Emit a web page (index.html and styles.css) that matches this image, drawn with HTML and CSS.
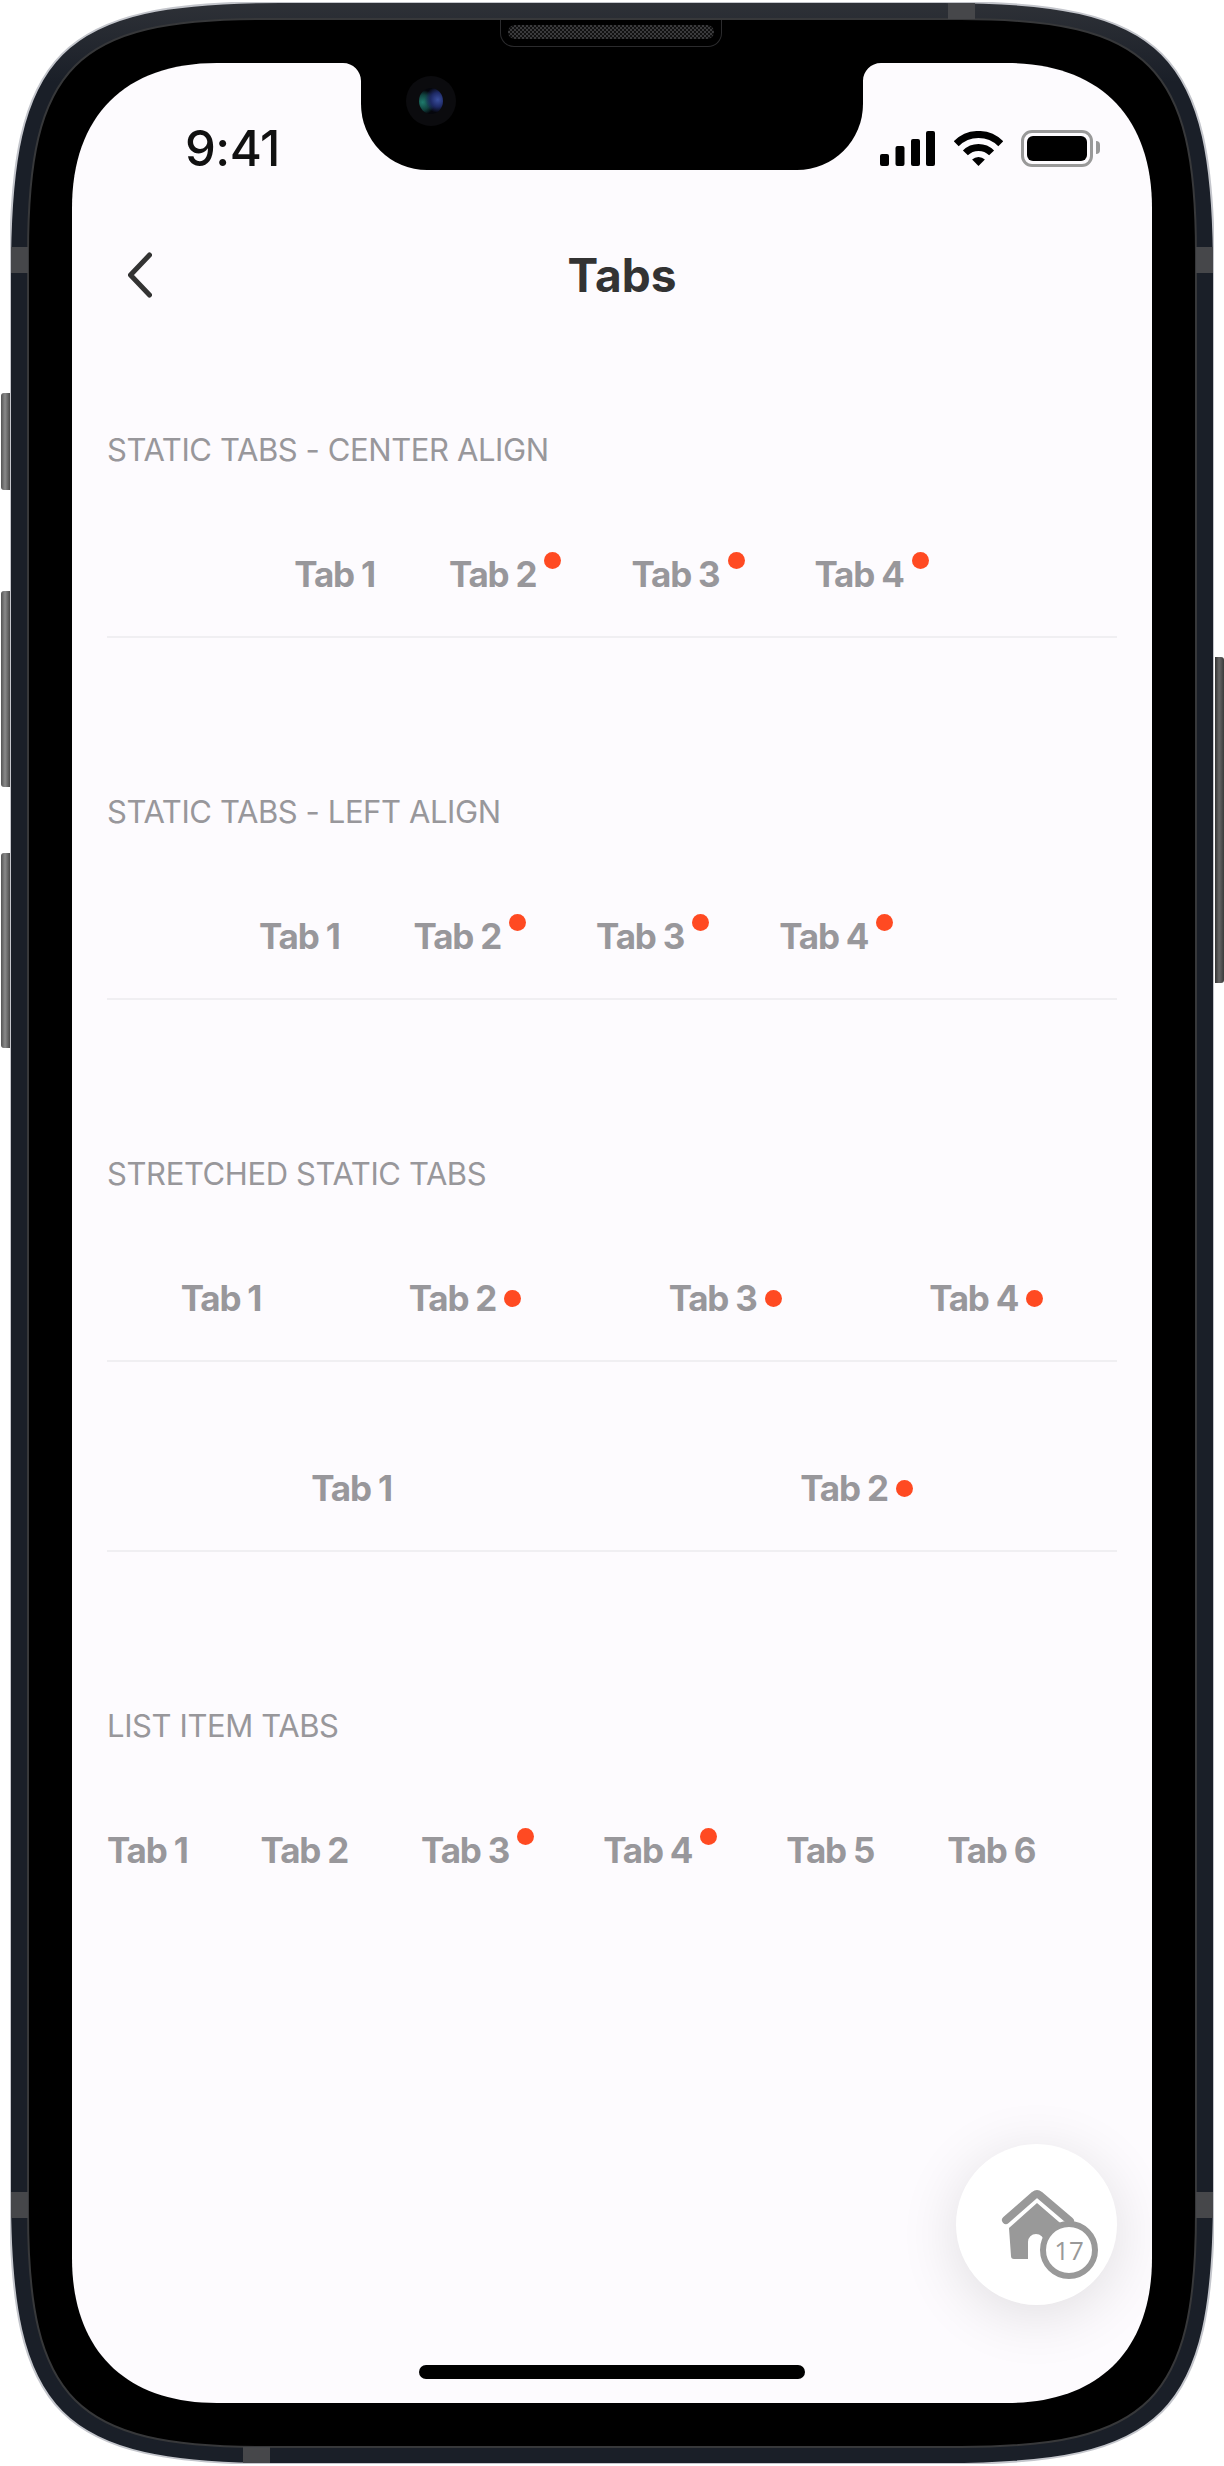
FILE: index.html
```html
<!DOCTYPE html>
<html lang="en">
<head>
    <meta charset="UTF-8">
    <title>Tabs</title>
    <link rel="stylesheet" href="styles.css">
</head>
<body>

<div class="phone">
    <svg class="phone-body" width="1204" height="2462" viewBox="0 0 1204 2462">
        <defs>
            <linearGradient id="band" gradientUnits="userSpaceOnUse" x1="0" y1="0" x2="0" y2="80">
                <stop offset="0" stop-color="#2e3137"/>
                <stop offset="1" stop-color="#1a1f28"/>
            </linearGradient>
        </defs>
        <path d="M270 0H934C1155 0 1204 49 1204 270V2192C1204 2413 1155 2462 934 2462H270C49 2462 0 2413 0 2192V270C0 49 49 0 270 0Z" fill="url(#band)" stroke="#c4c6cc" stroke-width="2"/>
        <path d="M253 17H951C1139 17 1186 64 1186 252V2210C1186 2398 1139 2445 951 2445H253C65 2445 18 2398 18 2210V252C18 64 65 17 253 17Z" fill="#000" stroke="#37383a" stroke-width="2"/>
    </svg>

    <span class="side-btn left-1"></span>
    <span class="side-btn left-2"></span>
    <span class="side-btn left-3"></span>
    <span class="side-btn right-1"></span>
    <span class="antenna ant-top"></span>
    <span class="antenna ant-left-a"></span>
    <span class="antenna ant-left-b"></span>
    <span class="antenna ant-right-a"></span>
    <span class="antenna ant-right-b"></span>
    <span class="antenna ant-bottom"></span>

    <div class="speaker"><span class="grill"></span></div>

    <div class="screen">
        <div class="notch">
            <svg class="notch-ear ear-left" width="18" height="18" viewBox="0 0 18 18"><path d="M0 0H18V18C18 8 10 0 0 0Z" fill="#000"/></svg>
            <svg class="notch-ear ear-right" width="18" height="18" viewBox="0 0 18 18"><path d="M18 0H0V18C0 8 8 0 18 0Z" fill="#000"/></svg>
            <span class="camera"><span class="lens"></span></span>
        </div>

        <div class="status-bar">
            <span class="time">9:41</span>
            <div class="status-icons">
                <svg width="55" height="35" viewBox="0 0 55 35" fill="#000">
                    <rect x="0" y="23" width="9" height="12" rx="2"/>
                    <rect x="15.500" y="15" width="9" height="20" rx="2"/>
                    <rect x="31" y="8" width="9" height="27" rx="2"/>
                    <rect x="46" y="0" width="9" height="35" rx="2"/>
                </svg>
                <svg class="wifi" width="49" height="35" viewBox="0 0 49 35">
                    <path d="M2.200 12.700A31.500 31.500 0 0 1 46.800 12.700" fill="none" stroke="#000" stroke-width="7"/>
                    <path d="M11.400 21.900A18.500 18.500 0 0 1 37.600 21.900" fill="none" stroke="#000" stroke-width="7"/>
                    <path d="M24.500 35L18.100 28.600A9 9 0 0 1 30.900 28.600Z" fill="#000"/>
                </svg>
                <div class="battery"><span class="battery-level"></span></div>
            </div>
        </div>

        <div class="nav">
            <svg class="back" width="24" height="46" viewBox="0 0 24 46">
                <path d="M21.500 3L2.500 23L21.500 43" fill="none" stroke="#333" stroke-width="5" stroke-linecap="round" stroke-linejoin="round"/>
            </svg>
            <h2 class="title">Tabs</h2>
        </div>

        <div class="content">
            <section class="section">
                <h3 class="label">STATIC TABS - CENTER ALIGN</h3>
                <div class="tabs tabs-static tabs-center">
                    <div class="tab">Tab 1</div>
                    <div class="tab">Tab 2<span class="dot dot-up"></span></div>
                    <div class="tab">Tab 3<span class="dot dot-up"></span></div>
                    <div class="tab">Tab 4<span class="dot dot-up"></span></div>
                </div>
            </section>

            <section class="section">
                <h3 class="label">STATIC TABS - LEFT ALIGN</h3>
                <div class="tabs tabs-static tabs-left">
                    <div class="tab">Tab 1</div>
                    <div class="tab">Tab 2<span class="dot dot-up"></span></div>
                    <div class="tab">Tab 3<span class="dot dot-up"></span></div>
                    <div class="tab">Tab 4<span class="dot dot-up"></span></div>
                </div>
            </section>

            <section class="section">
                <h3 class="label">STRETCHED STATIC TABS</h3>
                <div class="tabs tabs-stretch">
                    <div class="tab">Tab 1</div>
                    <div class="tab">Tab 2<span class="dot"></span></div>
                    <div class="tab">Tab 3<span class="dot"></span></div>
                    <div class="tab">Tab 4<span class="dot"></span></div>
                </div>
                <div class="tabs tabs-stretch tabs-second">
                    <div class="tab">Tab 1</div>
                    <div class="tab">Tab 2<span class="dot"></span></div>
                </div>
            </section>

            <section class="section">
                <h3 class="label">LIST ITEM TABS</h3>
                <div class="tabs tabs-static tabs-list">
                    <div class="tab">Tab 1</div>
                    <div class="tab">Tab 2</div>
                    <div class="tab">Tab 3<span class="dot dot-up"></span></div>
                    <div class="tab">Tab 4<span class="dot dot-up"></span></div>
                    <div class="tab">Tab 5</div>
                    <div class="tab">Tab 6</div>
                </div>
            </section>
        </div>

        <div class="fab">
            <svg width="161" height="161" viewBox="0 0 161 161">
                <path d="M50 76L78.500 51Q81 49 83.500 51L114 77" fill="none" stroke="#999" stroke-width="8" stroke-linecap="round"/>
                <path d="M81 59L110 84V115H88V98A8 8 0 0 0 72 98V115H58Q55 115 55 112L53 84Z" fill="#999"/>
            </svg>
            <span class="fab-badge">17</span>
        </div>

        <div class="home-indicator"></div>
    </div>
</div>

</body>
</html>
```

FILE: styles.css
```css
body {
    margin: 0;
    padding: 2px 0 0 10px;
    background-color: #fff;
    font-family: Inter, "Liberation Sans", sans-serif;
    overflow: hidden;
}

.phone {
    position: relative;
    box-sizing: border-box;
    width: 1204px;
    height: 2462px;
    padding: 61px 62px;
}

.phone-body {
    position: absolute;
    left: 0;
    top: 0;
}

.side-btn {
    position: absolute;
    width: 9px;
    border-radius: 3px 0 0 3px;
    background: linear-gradient(90deg, #555, #8a8a8a 45%, #4a4a4a);
}

.left-1 { left: -9px; top: 391px; height: 97px; }
.left-2 { left: -9px; top: 589px; height: 196px; }
.left-3 { left: -9px; top: 851px; height: 195px; }
.right-1 {
    right: -10px;
    top: 655px;
    height: 326px;
    border-radius: 0 3px 3px 0;
    background: linear-gradient(90deg, #333, #666 45%, #3a3a3a);
}

.antenna {
    position: absolute;
    background-color: #46474a;
}

.ant-top { left: 938px; top: 1px; width: 27px; height: 16px; }
.ant-left-a { left: 1px; top: 245px; width: 17px; height: 26px; }
.ant-left-b { left: 1px; top: 2190px; width: 17px; height: 26px; }
.ant-right-a { right: 1px; top: 245px; width: 17px; height: 26px; }
.ant-right-b { right: 1px; top: 2190px; width: 17px; height: 26px; }
.ant-bottom { left: 233px; bottom: 1px; width: 27px; height: 16px; }

.speaker {
    position: absolute;
    left: 490px;
    top: 18px;
    box-sizing: border-box;
    width: 222px;
    height: 27px;
    padding: 5px 7px;
    border: 1px solid #2b2b2d;
    border-top: none;
    border-radius: 0 0 14px 14px;
}

.grill {
    display: block;
    height: 14px;
    border-radius: 7px;
    background: repeating-conic-gradient(#3a3a3c 0 25%, #111 0 50%) 0 0 / 4px 4px;
}

.screen {
    position: relative;
    height: 100%;
    background-color: #fdfbfe;
    clip-path: path("M145 0H935C1027 0 1080 53 1080 145V2195C1080 2287 1027 2340 935 2340H145C53 2340 0 2287 0 2195V145C0 53 53 0 145 0Z");
}

.notch {
    position: absolute;
    left: 289px;
    top: 0;
    width: 502px;
    height: 107px;
    border-radius: 0 0 66px 66px;
    background-color: #000;
}

.notch-ear {
    position: absolute;
    top: 0;
}

.ear-left { left: -18px; }
.ear-right { right: -18px; }

.camera {
    position: absolute;
    left: 45px;
    top: 13px;
    display: flex;
    align-items: center;
    justify-content: center;
    width: 50px;
    height: 50px;
    border-radius: 50%;
    background-color: #0b0b0e;
}

.lens {
    width: 24px;
    height: 26px;
    border-radius: 50%;
    background: radial-gradient(circle at 78% 45%, #3a4f9e 0, #1e2a66 30%, transparent 55%),
                radial-gradient(circle at 15% 55%, #1f7a6c 0, #10433f 30%, transparent 50%),
                #05060c;
}

.status-bar {
    display: flex;
    justify-content: space-between;
    align-items: center;
    box-sizing: border-box;
    height: 127px;
    padding: 39px 59px 0 113px;
}

.time {
    margin-top: 5px;
    font-size: 49px;
    font-weight: 550;
    letter-spacing: -0.5px;
    color: #111;
}

.status-icons {
    display: flex;
    align-items: center;
    gap: 19px;
    margin-top: 4px;
}

.battery {
    position: relative;
    box-sizing: border-box;
    width: 72px;
    height: 37px;
    margin-left: -1px;
    padding: 3px;
    border: 3px solid #999;
    border-radius: 11px;
}

.battery::after {
    content: "";
    position: absolute;
    right: -10px;
    top: 8px;
    width: 4px;
    height: 13px;
    border-radius: 0 4px 4px 0;
    background-color: #999;
}

.battery-level {
    display: block;
    height: 100%;
    border-radius: 6px;
    background-color: #000;
}

.nav {
    display: flex;
    align-items: center;
    box-sizing: border-box;
    height: 170px;
    padding: 0 60px 0 56px;
}

.title {
    flex: 1;
    margin: 0;
    font-size: 46px;
    font-weight: 700;
    text-align: center;
    color: #333;
}

.content {
    padding: 69px 35px 0;
}

.section {
    margin-bottom: 153px;
}

.label {
    margin: 0 0 41px;
    font-size: 31px;
    font-weight: 400;
    letter-spacing: -0.4px;
    line-height: 42px;
    color: #98979b;
}

.tabs {
    display: flex;
    padding: 40px 0;
    border-bottom: 2px solid #f0eff2;
}

.tabs-static {
    gap: 74px;
}

.tabs-center {
    justify-content: center;
    padding-right: 5px;
}

.tabs-left {
    padding-left: 152px;
}

.tabs-list {
    gap: 73px;
    border-bottom: none;
}

.tabs-second {
    margin-top: 64px;
}

.tabs-stretch .tab {
    flex: 1 1 auto;
    justify-content: center;
}

.tab {
    display: flex;
    align-items: center;
    height: 44px;
    font-size: 35px;
    font-weight: 700;
    letter-spacing: -1.2px;
    color: #98979b;
}

.dot {
    width: 17px;
    height: 17px;
    margin-left: 8px;
    border-radius: 50%;
    background-color: #ff4a22;
}

.dot-up {
    align-self: flex-start;
    margin-right: -4px;
}

.fab {
    position: absolute;
    right: 35px;
    bottom: 98px;
    width: 161px;
    height: 161px;
    border-radius: 50%;
    background-color: #fff;
    box-shadow: 0 10px 60px rgba(0, 0, 0, 0.12);
}

.fab-badge {
    position: absolute;
    left: 84px;
    top: 77px;
    box-sizing: border-box;
    width: 58px;
    height: 58px;
    border: 6px solid #999;
    border-radius: 50%;
    background-color: #fff;
    font-family: "Open Sans", sans-serif;
    font-size: 26px;
    line-height: 46px;
    text-align: center;
    color: #999;
}

.home-indicator {
    position: absolute;
    left: 347px;
    bottom: 24px;
    width: 386px;
    height: 14px;
    border-radius: 7px;
    background-color: #000;
}
```
